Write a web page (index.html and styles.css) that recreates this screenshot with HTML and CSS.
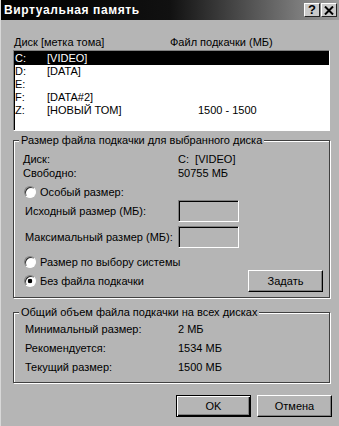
FILE: index.html
```html
<!DOCTYPE html>
<html lang="ru">

<head>
    <meta charset="UTF-8">
    <title>Виртуальная память</title>
    <link rel="stylesheet" href="styles.css">
</head>

<body>
    <div class="window">
        <div class="titlebar">
            <span class="title">Виртуальная память</span>
            <div class="title-buttons">
                <span class="title-btn">?</span>
                <span class="title-btn">
                    <svg width="10" height="9" viewBox="0 0 10 9">
                        <path d="M1 0.5 L9 8.5 M9 0.5 L1 8.5" stroke="#000" stroke-width="2" fill="none"/>
                    </svg>
                </span>
            </div>
        </div>

        <div class="content">
            <div class="list-header">
                <span class="head-drive">Диск [метка тома]</span>
                <span>Файл подкачки (МБ)</span>
            </div>
            <div class="listbox">
                <div class="row selected"><span class="c-letter">C:</span><span class="c-label">[VIDEO]</span><span></span></div>
                <div class="row"><span class="c-letter">D:</span><span class="c-label">[DATA]</span><span></span></div>
                <div class="row"><span class="c-letter">E:</span><span class="c-label"></span><span></span></div>
                <div class="row"><span class="c-letter">F:</span><span class="c-label">[DATA#2]</span><span></span></div>
                <div class="row"><span class="c-letter">Z:</span><span class="c-label">[НОВЫЙ ТОМ]</span><span>1500 - 1500</span></div>
            </div>

            <fieldset class="group group-drive">
                <legend>Размер файла подкачки для выбранного диска</legend>
                <div class="info">
                    <span>Диск:</span><span>C:&nbsp;&nbsp;[VIDEO]</span>
                    <span>Свободно:</span><span>50755 МБ</span>
                </div>
                <div class="radio-row first">
                    <span class="radio"></span><span>Особый размер:</span>
                </div>
                <div class="field-row">
                    <span class="field-label">Исходный размер (МБ):</span>
                    <input class="size-input" type="text" disabled>
                </div>
                <div class="field-row second">
                    <span class="field-label">Максимальный размер (МБ):</span>
                    <input class="size-input" type="text" disabled>
                </div>
                <div class="radio-row system">
                    <span class="radio"></span><span>Размер по выбору системы</span>
                </div>
                <div class="radio-row last">
                    <span class="radio checked"></span><span>Без файла подкачки</span>
                    <button class="btn btn-set">Задать</button>
                </div>
            </fieldset>

            <fieldset class="group group-total">
                <legend>Общий объем файла подкачки на всех дисках</legend>
                <div class="totals">
                    <span>Минимальный размер:</span><span>2 МБ</span>
                    <span>Рекомендуется:</span><span>1534 МБ</span>
                    <span>Текущий размер:</span><span>1500 МБ</span>
                </div>
            </fieldset>

            <div class="dialog-buttons">
                <button class="btn btn-default">OK</button>
                <button class="btn">Отмена</button>
            </div>
        </div>
    </div>
</body>

</html>
```

FILE: styles.css
```css
body {
    margin: 0;
    font-family: "Liberation Sans", Arial, sans-serif;
    font-size: 11px;
    color: #000;
    background-color: #b5b5b5;
}

.window {
    width: 339px;
    height: 426px;
    box-sizing: border-box;
    background-color: #b5b5b5;
    border-left: 1px solid #d8d8d8;
    overflow: hidden;
}

.titlebar {
    height: 20px;
    display: flex;
    align-items: center;
    justify-content: space-between;
    padding: 0 2px 0 3px;
    background: linear-gradient(to right, #000 0%, #111 50%, #9c9c9c 100%);
}

.title {
    color: #fff;
    font-weight: bold;
    font-size: 12px;
    letter-spacing: 0.6px;
}

.title-buttons {
    display: flex;
    gap: 1px;
}

.title-btn {
    width: 16px;
    height: 14px;
    box-sizing: border-box;
    display: flex;
    align-items: center;
    justify-content: center;
    background-color: #cacaca;
    border: 1px solid;
    border-color: #fff #222 #222 #fff;
    font-weight: bold;
    font-size: 13px;
    line-height: 12px;
}

.content {
    padding: 16px 9px 0 12px;
}

.list-header {
    display: flex;
    height: 13px;
    line-height: 13px;
    margin-left: 1px;
}

.head-drive {
    width: 156px;
}

.listbox {
    height: 81px;
    margin-top: 1px;
    box-sizing: border-box;
    padding: 1px 0 0 1px;
    background-color: #fff;
    border: 1px solid;
    border-color: #808080 #fff #fff #808080;
    box-shadow: inset 1px 1px #000;
}

.row {
    display: flex;
    height: 13px;
    line-height: 13px;
}

.row.selected {
    background-color: #000;
    color: #fff;
}

.c-letter {
    width: 32px;
}

.c-label {
    width: 151px;
}

.group {
    margin: 3px 0 0;
    padding: 5px 6px 5px 9px;
    border: 1px solid #404040;
    box-shadow: inset 1px 1px #fff, 1px 1px #fff;
}

.group legend {
    margin-left: -4px;
    padding: 0 2px;
    line-height: 13px;
    background-color: #b5b5b5;
}

.info {
    display: grid;
    grid-template-columns: 155px auto;
    line-height: 14px;
}

.radio-row {
    display: flex;
    align-items: center;
    height: 14px;
}

.radio-row.first {
    margin-top: 5px;
}

.radio-row.system {
    margin-top: 7px;
}

.radio-row.last {
    height: 22px;
    margin-top: 1px;
}

.radio {
    width: 12px;
    height: 12px;
    box-sizing: border-box;
    margin: 0 4px 0 1px;
    border-radius: 50%;
    background-color: #fff;
    border: 1px solid;
    border-color: #808080 #fff #fff #808080;
    box-shadow: inset 1px 1px #303030;
}

.radio.checked {
    background: radial-gradient(circle, #000 0 2px, #fff 2.6px);
}

.field-row {
    display: flex;
    align-items: center;
    height: 22px;
    margin-top: 1px;
}

.field-row.second {
    margin-top: 4px;
}

.field-label {
    width: 153px;
    margin-left: 2px;
}

.size-input {
    width: 61px;
    height: 22px;
    margin: 0;
    padding: 0;
    box-sizing: border-box;
    background-color: #b5b5b5;
    border: 1px solid;
    border-color: #808080 #fff #fff #808080;
    box-shadow: inset 1px 1px #000;
}

.btn {
    width: 75px;
    height: 22px;
    box-sizing: border-box;
    padding: 0;
    font: inherit;
    color: #000;
    background-color: #b5b5b5;
    border: 1px solid;
    border-color: #fff #000 #000 #fff;
    box-shadow: inset -1px -1px #808080;
}

.btn-set {
    margin-left: auto;
}

.btn-default {
    border: 1px solid #000;
    box-shadow: inset 1px 1px #fff, inset -1px -1px #000, inset -2px -2px #808080;
}

.group-total {
    margin-top: 8px;
    padding-top: 1px;
}

.totals {
    display: grid;
    grid-template-columns: 153px auto;
    margin-left: 2px;
    line-height: 19px;
}

.dialog-buttons {
    display: flex;
    justify-content: flex-end;
    gap: 6px;
    margin: 12px -2px 0 0;
}
```
